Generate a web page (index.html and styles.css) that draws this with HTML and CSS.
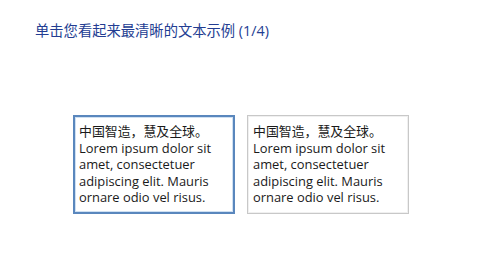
FILE: index.html
```html
<!DOCTYPE html>
<html lang="zh-CN">
<head>
    <meta charset="UTF-8">
    <title>ClearType 文本调谐器</title>
    <link rel="stylesheet" href="styles.css">
</head>
<body>
    <div class="tuner">
        <h1 class="tuner-title">单击您看起来最清晰的文本示例 (1/4)</h1>
        <div class="samples">
            <div class="sample selected">
                <p>中国智造，慧及全球。<br>Lorem ipsum dolor sit amet, consectetuer adipiscing elit. Mauris ornare odio vel risus.</p>
            </div>
            <div class="sample">
                <p>中国智造，慧及全球。<br>Lorem ipsum dolor sit amet, consectetuer adipiscing elit. Mauris ornare odio vel risus.</p>
            </div>
        </div>
    </div>
</body>
</html>
```

FILE: styles.css
```css
body {
    margin: 0;
    background: #fff;
    font-family: "Open Sans", "Noto Sans CJK SC", sans-serif;
}

.tuner {
    padding: 21px 0 0 35px;
}

.tuner-title {
    margin: 0;
    font-size: 14.3px;
    font-weight: normal;
    color: #233d92;
    line-height: 20px;
}

.samples {
    display: flex;
    gap: 12px;
    margin: 74px 0 0 38px;
}

.sample {
    box-sizing: border-box;
    width: 162px;
    height: 99px;
    padding: 7px 0 0 5px;
    border: 1px solid #c8c8c8;
    box-shadow: inset 0 0 0 1px #f0f0f0;
}

.sample.selected {
    border: 2px solid #5a87bd;
    box-shadow: inset 0 0 0 1px #cfe0f2;
    padding: 6px 0 0 4px;
}

.sample p {
    margin: 0;
    font-size: 12.9px;
    line-height: 16.6px;
    color: #1a1a1a;
}
```
